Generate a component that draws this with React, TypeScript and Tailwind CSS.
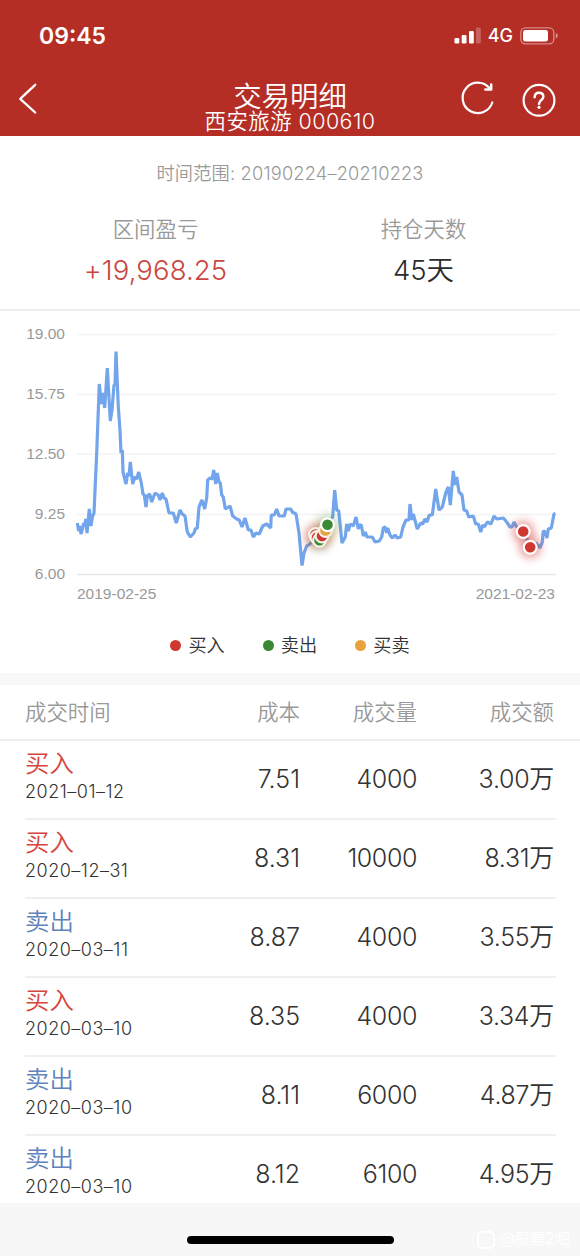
import { clsx } from "clsx"

interface Trade {
  id: number
  side: "buy" | "sell"
  date: string
  cost: string
  volume: string
  amount: string
}

const trades: Trade[] = [
  { id: 1, side: "buy", date: "2021–01–12", cost: "7.51", volume: "4000", amount: "3.00" },
  { id: 2, side: "buy", date: "2020–12–31", cost: "8.31", volume: "10000", amount: "8.31" },
  { id: 3, side: "sell", date: "2020–03–11", cost: "8.87", volume: "4000", amount: "3.55" },
  { id: 4, side: "buy", date: "2020–03–10", cost: "8.35", volume: "4000", amount: "3.34" },
  { id: 5, side: "sell", date: "2020–03–10", cost: "8.11", volume: "6000", amount: "4.87" },
  { id: 6, side: "sell", date: "2020–03–10", cost: "8.12", volume: "6100", amount: "4.95" },
]

const gridLines = [
  { label: "19.00", y: 23.5 },
  { label: "15.75", y: 83.5 },
  { label: "12.50", y: 143 },
  { label: "9.25", y: 203.5 },
  { label: "6.00", y: 263.5 },
]

const legend = [
  { label: "买入", dot: "bg-[#cf3830]" },
  { label: "卖出", dot: "bg-[#3a8a35]" },
  { label: "买卖", dot: "bg-[#e6a23c]" },
]

// Trade markers in drawing order, the later ones lie on top
const markers = [
  { x: 315.5, y: 223.5, color: "#cf3830" },
  { x: 317, y: 226.5, color: "#cf3830" },
  { x: 319.5, y: 229.3, color: "#3a8a35" },
  { x: 322, y: 225, color: "#cf3830" },
  { x: 325.5, y: 219.5, color: "#e6a23c" },
  { x: 327.5, y: 213.8, color: "#3a8a35" },
  { x: 523.2, y: 220.5, color: "#cf3830" },
  { x: 530.2, y: 236.3, color: "#cf3830" },
]

const priceLine =
  "77.3,212 78.7,220 80,215 81,223 82.7,217 83.7,212 84.7,215 85.7,208 87,222 89.3,198 91,215 92.3,206 94,202 " +
  "96.7,142 99.3,73 101.3,93 102.7,82 104.7,97 107.3,57 110.3,110 112,99 114,74 115,74 116,40.5 118.3,96 120,119 121,142 " +
  "122.3,139 123,161 126,173 127.7,162 129,165 130.3,151 132.7,173 134.7,166 136.7,168 138.7,161 141.3,172 143,183 " +
  "144.3,184 146,196 147.3,185 149.7,183 151.7,191 155,182 158.3,184 160,189 162.3,182 164,187 166,188 169,202 173.3,202 " +
  "176.3,212 180,199 182.3,203 185,205 187.3,221 190.3,226 194,222 195.3,218 197.3,217 199,196 202,189 204.7,198 " +
  "206.7,187 207.7,169 210,167 212.3,168 213.7,159 215.7,173 217.3,162 219,171 220.3,172 221.7,184 223.3,186 225.3,198 " +
  "230,195 232.7,205 236.7,208 239.3,209 242,216 245,207 248.3,219 251,219 253.3,226 256,222 259.3,223 262.7,215 " +
  "266.7,213 270.7,217 271.3,204 274.3,204 276.7,198 279,205 284.3,205 286,198 290.7,198 292.3,201 296,203 299,222 " +
  "302,254.5 304,242 306.7,235 310,233 313.3,229 318.3,224 325,219 330,209 332.7,206 334.7,179 336.7,199 338.7,200 " +
  "342,232 345.3,226 346.7,213 348.3,220 350.3,213 353.3,215 356,206 358.3,218 359.3,214 361.3,214 363.3,225 365.3,221 " +
  "367,226 372.3,226 375,231 379.3,230 381.7,226 383.3,217 385.3,216 386.7,222 387.7,217 390,224 392.3,227 395,224 " +
  "397.3,227 400.7,226 403,216 406,209 409,209 410,193 412,209 413.3,203 417.3,218 420.7,212 422.7,213 425,208 427,211 " +
  "429.3,204 432.3,204 435.7,178 439,199 442.3,196 445.7,182 448.3,176 450.3,194 453.3,160 455,174 456.7,166 459,181 " +
  "462,184 464,199 466.7,200 468.7,206 473.3,205 475.7,213 478.3,213 480.7,221 482.7,214 484.3,216 487.3,211 491,213 " +
  "494,205 496.7,208 503.3,207 506.7,211 510,216 512,216 514,211 516.7,216 520,218 523.3,221 526.7,227 530,236 536,232 " +
  "540,237 542.3,231 543.3,220 545,221 547,227 548.3,218 551.3,217 554,203 555.5,202.5"

function StatusBar() {
  return (
    <div className="flex h-[72px] items-center justify-between pl-[39px] pr-[22px] text-white">
      <span className="text-[23px] font-semibold leading-none">09:45</span>
      <div className="flex items-center">
        <svg width="28" height="18" viewBox="0 0 28 18" fill="currentColor">
          <rect x="0.5" y="11" width="4.8" height="5.5" rx="1.2" />
          <rect x="7.7" y="8" width="4.8" height="8.5" rx="1.2" />
          <rect x="15" y="4" width="4.8" height="12.5" rx="1.2" />
          <rect x="22" y="0.5" width="4.8" height="16" rx="1.2" opacity="0.25" />
        </svg>
        <span className="ml-[6px] text-[18px] font-medium leading-none">4G</span>
        <svg className="ml-[7px]" width="38" height="18" viewBox="0 0 38 18" fill="none">
          <rect x="0.8" y="0.8" width="33" height="16" rx="4.5" stroke="#fff" strokeOpacity="0.45" strokeWidth="1.3" />
          <rect x="3" y="3" width="25" height="11.6" rx="2.4" fill="#fff" />
          <path d="M35.8 6v5.4c1.3-.5 1.9-1.5 1.9-2.7s-.6-2.2-1.9-2.7z" fill="#fff" fillOpacity="0.5" />
        </svg>
      </div>
    </div>
  )
}

function NavBar() {
  return (
    <div className="grid h-16 grid-cols-[150px_280px_150px] text-white">
      <svg className="ml-[18px] mt-[11px]" width="20" height="32" viewBox="0 0 20 32" fill="none">
        <path d="M17.2 1.8 2.2 15.8l15 13.7" stroke="currentColor" strokeWidth="2.3" strokeLinecap="round" strokeLinejoin="round" />
      </svg>
      <div className="flex flex-col items-center pt-[11px]">
        <h1 className="text-[28.4px] font-[350] leading-[27px]">交易明细</h1>
        <p className="whitespace-nowrap text-[21.5px] leading-[22px] tracking-[0.4px]">西安旅游 000610</p>
      </div>
      <div className="flex gap-[26px] pl-[30px] pt-[9px]">
        <svg width="36" height="36" viewBox="0 0 36 36" fill="none" stroke="currentColor" strokeWidth="2.2" strokeLinecap="round" strokeLinejoin="round">
          <path d="M32.3 21.5A15.2 15.2 0 1 1 29.6 7.3" />
          <path d="M31.2 3.6v5h-5.8" strokeWidth="2.5" />
        </svg>
        <svg width="36" height="36" viewBox="0 0 36 36" fill="none" stroke="currentColor" strokeWidth="2.2" strokeLinecap="round">
          <circle cx="17" cy="19.3" r="15.4" />
          <path d="M12.6 16.2c.1-2.8 1.8-4.5 4.4-4.5s4.4 1.6 4.4 4.1c0 3.2-4.4 3.3-4.4 7.2" strokeWidth="2.4" />
          <circle cx="17" cy="26.3" r="1.6" fill="currentColor" stroke="none" />
        </svg>
      </div>
    </div>
  )
}

function Summary() {
  return (
    <section className="h-[175px] border-b-2 border-[#efefef] pt-[23px] text-center">
      <p className="text-[18.2px] leading-[28px] tracking-[0.2px] text-[#999]">时间范围: 20190224–20210223</p>
      <div className="mt-[27px] grid grid-cols-[311px_225px]">
        <div>
          <p className="text-[21.4px] leading-[30px] text-[#999]">区间盈亏</p>
          <p className="mt-[6px] text-[27.5px] leading-[40px] tracking-[0.1px] text-[#c9473f]">+19,968.25</p>
        </div>
        <div>
          <p className="text-[21.4px] leading-[30px] text-[#999]">持仓天数</p>
          <p className="mt-[6px] text-[27.5px] leading-[40px] text-[#2c2c2c]">45天</p>
        </div>
      </div>
    </section>
  )
}

function PriceChart() {
  return (
    <section className="h-[362px]">
      <svg className="block" width="580" height="304" viewBox="0 0 580 304">
        <defs>
          <filter id="glow" x="-150%" y="-150%" width="400%" height="400%">
            <feGaussianBlur stdDeviation="4.5" />
          </filter>
        </defs>
        <g className="font-['Liberation_Sans',sans-serif] text-[15.5px] font-normal" fill="#999">
          {gridLines.map((line) => (
            <g key={line.label}>
              <line x1="77" x2="556" y1={line.y} y2={line.y} stroke={line.label === "6.00" ? "#e8e8e8" : "#f3f3f3"} strokeWidth="1.5" />
              <text x="65" y={line.y + 4.5} textAnchor="end">{line.label}</text>
            </g>
          ))}
          <text x="77" y="287.5">2019-02-25</text>
          <text x="555" y="287.5" textAnchor="end">2021-02-23</text>
        </g>
        <polyline points={priceLine} fill="none" stroke="#72a5ec" strokeWidth="3.2" strokeLinejoin="bevel" />
        {markers.map((m, i) => (
          <circle key={i} cx={m.x} cy={m.y} r="11" fill={m.color} opacity={i < 6 ? 0.25 : 0.45} filter="url(#glow)" />
        ))}
        {markers.map((m, i) => (
          <circle key={i} cx={m.x} cy={m.y} r="6.4" fill={m.color} stroke={i < 5 ? "#f6f1e6" : "#fff"} strokeWidth="2.2" />
        ))}
      </svg>
      <div className="flex justify-center gap-[38px] pt-4">
        {legend.map((item) => (
          <div key={item.label} className="flex items-center gap-[7px]">
            <span className={clsx("h-[11px] w-[11px] rounded-full", item.dot)} />
            <span className="text-[18.2px] leading-[28px] text-[#333]">{item.label}</span>
          </div>
        ))}
      </div>
    </section>
  )
}

function TradeTable() {
  return (
    <section className="h-[518px] overflow-hidden bg-white">
      <div className="grid h-[56px] grid-cols-[150px_125px_117px_137px] items-center border-b-2 border-[#efefef] px-[25px] text-right text-[21.4px] text-[#999]">
        <span className="text-left">成交时间</span>
        <span>成本</span>
        <span>成交量</span>
        <span>成交额</span>
      </div>
      {trades.map((trade) => (
        <div
          key={trade.id}
          className="ml-[25px] mr-[24px] grid h-[79px] grid-cols-[150px_125px_117px_137px] border-b-2 border-[#efefef] text-right text-[25px] leading-[76px] text-[#333]"
        >
          <div className="pt-[6px] text-left">
            <p className={clsx("text-[24.4px] leading-[33px]", trade.side === "buy" ? "text-[#d5453e]" : "text-[#5f83bd]")}>
              {trade.side === "buy" ? "买入" : "卖出"}
            </p>
            <p className="text-[18px] leading-[24px] tracking-[0.5px]">{trade.date}</p>
          </div>
          <span>{trade.cost}</span>
          <span className="tracking-[-0.4px]">{trade.volume}</span>
          <span className="tracking-[-0.3px]">{trade.amount}万</span>
        </div>
      ))}
    </section>
  )
}

export default function App() {
  return (
    <div className="h-[1256px] w-[580px] overflow-hidden bg-white font-['Inter','Noto_Sans_CJK_SC',sans-serif] font-[350]">
      <header className="h-[136px] bg-[#b42e26]">
        <StatusBar />
        <NavBar />
      </header>
      <Summary />
      <PriceChart />
      <div className="h-3 bg-[#f8f8f8]" />
      <TradeTable />
      {/* Home indicator and watermark */}
      <footer className="grid h-[53px] grid-cols-[187px_207px_1fr] bg-[#f7f7f7]">
        <span />
        <span className="mt-[33px] h-2 rounded-full bg-black" />
        <div className="flex items-center justify-end gap-1 pr-[10px] pt-[20px] text-[15.3px] font-normal text-white">
          <svg width="20" height="20" viewBox="0 0 20 20" fill="none" stroke="currentColor" strokeWidth="2">
            <rect x="2" y="2" width="16" height="16" rx="4" />
            <path d="M6 7.5v1.5M14 7.5v1.5M7 13h6" strokeWidth="1.2" />
          </svg>
          <span>@股票2吧</span>
        </div>
      </footer>
    </div>
  )
}
